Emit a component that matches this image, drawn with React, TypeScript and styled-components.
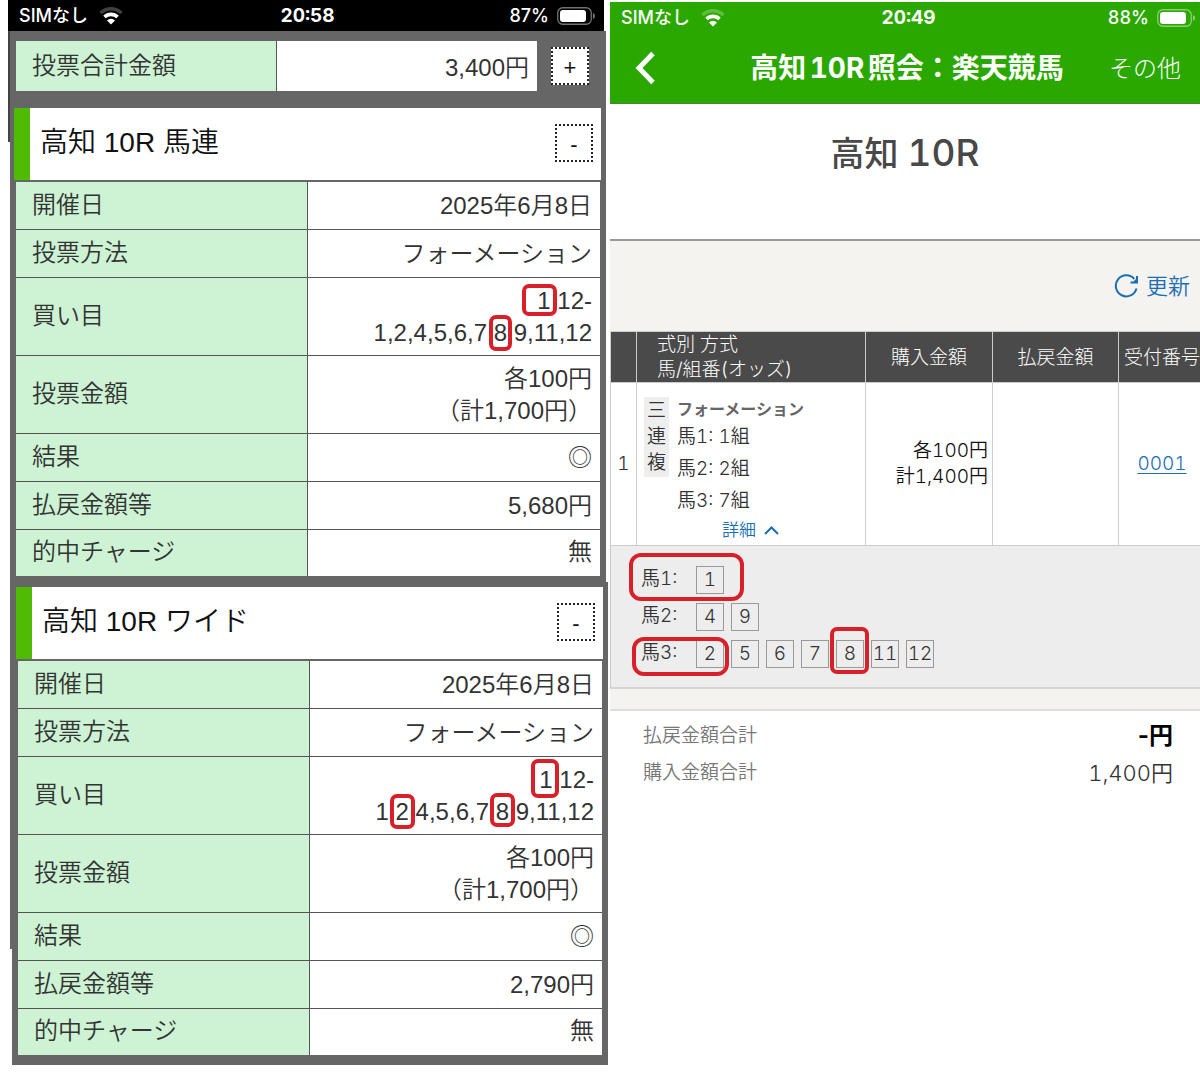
import React from "react";
import styled, { createGlobalStyle, css } from "styled-components";

const GlobalStyle = createGlobalStyle`
  *, *::before, *::after { box-sizing: border-box; }
  body {
    margin: 0;
    background: #fff;
    font-family: "Liberation Sans", "Noto Sans CJK JP", sans-serif;
  }
  button {
    margin: 0;
    padding: 0;
    border: 0;
    background: none;
    font: inherit;
    color: inherit;
    cursor: pointer;
  }
  table { border-collapse: separate; border-spacing: 0; table-layout: fixed; }
  th, td { padding: 0; font-weight: inherit; text-align: left; }
`;

const Page = styled.div`
  display: grid;
  grid-template-columns: 600fr 590fr;
  align-items: start;
  gap: 2px;
  padding-left: 8px;
`;

/* ---------- status bar ---------- */

const StatusRow = styled.div`
  display: grid;
  grid-template-columns: 1fr auto 1fr;
  align-items: center;
  height: 32px;
  padding: 0 4px 0 11px;
  color: #fff;
  font-family: Inter, "Noto Sans CJK JP", sans-serif;
  font-size: 18px;
  line-height: 32px;
  font-weight: 500;
`;

const DarkStatusRow = styled(StatusRow)`
  height: 31px;
  margin-right: 4px;
  padding-right: 8px;
  background: #000;
`;

const StatusSide = styled.div<{ $end?: boolean }>`
  display: flex;
  align-items: center;
  justify-content: ${(p) => (p.$end ? "flex-end" : "flex-start")};
  gap: ${(p) => (p.$end ? 8 : 11)}px;
`;

const Clock = styled.span`
  font-size: 19px;
  font-weight: 700;
  font-variant-numeric: tabular-nums;
`;

function Wifi() {
  return (
    <svg width="24" height="18" viewBox="0 0 24 18" fill="none" aria-hidden="true">
      <path d="M1.500 6a15 15 0 0 1 21 0" stroke="#fff" strokeOpacity="0.25" strokeWidth="3.400" />
      <path d="M5.500 10a9.300 9.300 0 0 1 13 0" stroke="#fff" strokeWidth="3.600" />
      <path d="M12 17.500l-4-4a5.600 5.600 0 0 1 8 0z" fill="#fff" />
    </svg>
  );
}

function Battery() {
  return (
    <svg width="39" height="18" viewBox="0 0 39 18" fill="none" aria-hidden="true">
      <rect x="0.75" y="0.75" width="33.5" height="16.5" rx="5" stroke="#fff" strokeOpacity="0.45" strokeWidth="1.3" />
      <rect x="3" y="3" width="26" height="12" rx="3" fill="#fff" />
      <path d="M36 6v6c1.300-.5 2-1.700 2-3s-.7-2.500-2-3z" fill="#fff" fillOpacity="0.45" />
    </svg>
  );
}

function StatusContent({ time, level }: { time: string; level: string }) {
  return (
    <>
      <StatusSide>
        <span>SIMなし</span>
        <Wifi />
      </StatusSide>
      <Clock>{time}</Clock>
      <StatusSide $end>
        <span>{level}</span>
        <Battery />
      </StatusSide>
    </>
  );
}

/* ---------- red marker rings ---------- */

const Marked = styled.span`
  position: relative;
`;

const Ring = styled.span<{ $inset: string; $round?: number }>`
  position: absolute;
  inset: ${(p) => p.$inset};
  border: 4px solid #d8202a;
  border-radius: ${(p) => p.$round ?? 7}px;
  pointer-events: none;
`;

/* ---------- left pane ---------- */

const Sheet = styled.section<{ $shifted?: boolean }>`
  position: relative;
  margin: ${(p) => (p.$shifted ? "0 0 0 4px" : "0 2px 0 2px")};
  padding: ${(p) => (p.$shifted ? "5px 0 10px" : "10px 0 6px")};
  background: #666;
  color: #333;
  font-size: 24px;
  font-weight: 350;
  line-height: 32px;

  &::before {
    content: "";
    position: absolute;
    top: 0;
    left: -2px;
    width: 2px;
    height: ${(p) => (p.$shifted ? 367 : 111)}px;
    background: ${(p) => (p.$shifted ? "#666" : "#444")};
  }
`;

const labelCell = css`
  background: #cdf3d4;
  border-right: 1px solid #555;
  padding-left: 16px;
`;

const Summary = styled.div`
  display: flex;
  align-items: center;
  gap: 14px;
  padding: 0 17px 0 6px;
  margin-bottom: 17px;
`;

const SummaryTable = styled.table`
  flex: 1;
  th {
    ${labelCell}
    width: 50%;
    height: 50px;
  }
  td {
    padding: 4px 8px 0 0;
    background: #fff;
    text-align: right;
  }
`;

const ToggleButton = styled.button`
  flex: none;
  width: 38px;
  height: 38px;
  padding-top: 4px;
  border: 2px dotted #222;
  background: #fff;
  color: #111;
  font-size: 22px;
  line-height: 30px;
`;

const BetHeader = styled.header`
  display: flex;
  align-items: center;
  justify-content: space-between;
  height: 72px;
  margin: 0 5px 2px 4px;
  padding: 0 8px 2px 10px;
  border-left: 16px solid #4fbb05;
  background: #fff;
`;

const BetTitle = styled.h2`
  margin: 0;
  color: #111;
  font-size: 28px;
  font-weight: 350;
  line-height: 32px;
`;

const BetTable = styled.table`
  width: calc(100% - 12px);
  margin: 0 6px;
  th {
    ${labelCell}
    width: 50%;
    padding-bottom: 1px;
  }
  td {
    padding-right: 8px;
    background: #fff;
    text-align: right;
  }
  th, td {
    border-bottom: 1px solid #555;
  }
  tr:last-child th, tr:last-child td {
    padding-bottom: 2px;
    border-bottom: 0;
  }
`;

const BetRow = styled.tr<{ $h: number }>`
  height: ${(p) => p.$h}px;
`;

function BetCard({ title, picks, payout }: { title: string; picks: React.ReactNode; payout: string }) {
  return (
    <>
      <BetHeader>
        <BetTitle>{title}</BetTitle>
        <ToggleButton type="button">-</ToggleButton>
      </BetHeader>
      <BetTable>
        <tbody>
          <BetRow $h={48}><th scope="row">開催日</th><td>2025年6月8日</td></BetRow>
          <BetRow $h={48}><th scope="row">投票方法</th><td>フォーメーション</td></BetRow>
          <BetRow $h={78}><th scope="row">買い目</th><td>{picks}</td></BetRow>
          <BetRow $h={78}><th scope="row">投票金額</th><td>各100円<br />（計1,700円）</td></BetRow>
          <BetRow $h={48}><th scope="row">結果</th><td>◎</td></BetRow>
          <BetRow $h={48}><th scope="row">払戻金額等</th><td>{payout}</td></BetRow>
          <BetRow $h={46}><th scope="row">的中チャージ</th><td>無</td></BetRow>
        </tbody>
      </BetTable>
    </>
  );
}

/* ---------- right pane ---------- */

const Inquiry = styled.main`
  min-width: 0;
  overflow: hidden;
  padding-top: 2px;
  color: #333;
  font-family: Inter, "Noto Sans CJK JP", sans-serif;
  font-size: 19px;
  font-weight: 350;
  font-variant-numeric: tabular-nums;
  line-height: 26px;
`;

const AppBar = styled.header`
  height: 102px;
  background: #2aa800;
  border-bottom: 1px solid #45862f;
  color: #fff;
`;

const NavRow = styled.div`
  display: grid;
  grid-template-columns: 110px 1fr 106px;
  align-items: center;
  height: 68px;
`;

const BackButton = styled.button`
  display: flex;
  padding-left: 25px;
`;

const NavTitle = styled.h1`
  margin: 0;
  font-size: 28px;
  line-height: 36px;
  font-weight: 700;
  text-align: center;
  text-autospace: normal;
  white-space: nowrap;
`;

const MoreButton = styled.button`
  padding: 2px 19px 0 0;
  font-size: 24px;
  line-height: 32px;
  font-weight: 300;
  text-align: right;
`;

const RaceTitle = styled.h2`
  margin: 0;
  height: 135px;
  padding-top: 24px;
  color: #484848;
  font-size: 34px;
  font-weight: 500;
  line-height: 50px;
  text-align: center;
`;

const RaceNumber = styled.span`
  font-size: 37px;
`;

const Toolbar = styled.div`
  display: flex;
  justify-content: flex-end;
  align-items: center;
  height: 92px;
  padding-right: 10px;
  border-top: 2px solid #999;
  background: #f4f3f0;
`;

const RefreshButton = styled.button`
  display: flex;
  align-items: center;
  gap: 7px;
  color: #1a6fb4;
  font-size: 22px;
  line-height: 30px;
`;

const OrderTable = styled.table`
  width: 100%;
  border-left: 1px solid #ccc;
  border-top: 1px solid #ccc;
  th {
    height: 51px;
    background: #4a4a4a;
    color: #fff;
    font-weight: 300;
    line-height: 25px;
    text-align: center;
    white-space: nowrap;
  }
  th:nth-child(2) {
    padding-left: 20px;
    text-align: left;
  }
  th, td {
    border-right: 1px solid #ccc;
    border-bottom: 1px solid #ccc;
  }
  th:last-child, td:last-child {
    padding-left: 5px;
    border-right: 0;
  }
  && th:last-child {
    text-align: left;
  }
  tbody td {
    height: 163px;
    background: #fff;
    text-align: center;
  }
`;

const AmountCell = styled.td`
  && {
    padding-right: 4px;
    color: #111;
    text-align: right;
  }
`;

const BetCell = styled.div`
  display: grid;
  grid-template-columns: 25px 1fr;
  column-gap: 8px;
  height: 162px;
  padding: 14px 8px 0 7px;
  text-align: left;
`;

const TypeTag = styled.span`
  align-self: start;
  height: 80px;
  padding-top: 1px;
  background: #eee;
  text-align: center;
`;

const Method = styled.div`
  color: #666;
  font-size: 16px;
  font-weight: 600;
  line-height: 24px;
`;

const Group = styled.div`
  line-height: 32px;
`;

const DetailToggle = styled.button`
  display: flex;
  align-items: center;
  gap: 8px;
  margin-left: 45px;
  color: #1a6fb4;
  font-size: 17px;
  line-height: 26px;
`;

const ReceiptLink = styled.a`
  color: #1a6fb4;
  font-size: 19px;
  text-decoration: underline;
  text-underline-offset: 3px;
`;

const Detail = styled.div`
  display: grid;
  align-content: start;
  gap: 9px;
  height: 143px;
  padding: 20px 0 0 30px;
  border-left: 1px solid #ccc;
  border-bottom: 2px solid #d4d4d4;
  background: #ededed;
`;

const DetailRow = styled.div`
  display: flex;
  width: fit-content;
  position: relative;
  line-height: 28px;
`;

const DetailLabel = styled.span`
  width: 55px;
  margin-top: -1px;
`;

const Numbers = styled.div`
  display: flex;
  gap: 7px;
`;

const NumberBox = styled.span`
  position: relative;
  display: flex;
  justify-content: center;
  width: 28px;
  height: 28px;
  border: 1px solid #999;
  line-height: 26px;
`;

const Band = styled.div`
  height: 20px;
  background: #f4f3f0;
`;

const Totals = styled.dl`
  margin: 0;
  padding: 7px 27px 0 33px;
  border-top: 2px solid #ddd;
`;

const TotalRow = styled.div`
  display: flex;
  justify-content: space-between;
  height: 37px;
  line-height: 36px;
  dt { color: #777; }
  dd { margin: 0; font-size: 22px; }
`;

const Strong = styled.strong`
  color: #000;
  font-size: 24px;
  font-weight: 700;
  font-variant-numeric: normal;
`;

export default function App() {
  return (
    <>
      <GlobalStyle />
      <Page>
        <div>
          <DarkStatusRow>
            <StatusContent time="20:58" level="87%" />
          </DarkStatusRow>
          <Sheet>
            <Summary>
              <SummaryTable>
                <tbody>
                  <tr>
                    <th scope="row">投票合計金額</th>
                    <td>3,400円</td>
                  </tr>
                </tbody>
              </SummaryTable>
              <ToggleButton type="button">+</ToggleButton>
            </Summary>
            <BetCard
              title="高知 10R 馬連"
              payout="5,680円"
              picks={
                <>
                  <Marked>1<Ring $inset="-3px -6px -2px -15px" /></Marked>,12-
                  <br />
                  1,2,4,5,6,7,<Marked>8<Ring $inset="-4px -5px -5px -5px" /></Marked>,9,11,12
                </>
              }
            />
          </Sheet>
          <Sheet $shifted>
            <BetCard
              title="高知 10R ワイド"
              payout="2,790円"
              picks={
                <>
                  <Marked>1<Ring $inset="-7px -6px -5px -8px" /></Marked>,12-
                  <br />
                  1,<Marked>2<Ring $inset="-4px -6px -4px -6px" /></Marked>,4,5,6,7,
                  <Marked>8<Ring $inset="-5px -6px -2px -6px" /></Marked>,9,11,12
                </>
              }
            />
          </Sheet>
        </div>

        <Inquiry>
          <AppBar>
            <StatusRow>
              <StatusContent time="20:49" level="88%" />
            </StatusRow>
            <NavRow>
              <BackButton type="button" aria-label="戻る">
                <svg width="20" height="34" viewBox="0 0 20 34" fill="none" aria-hidden="true">
                  <path d="M18 2.500L4 17l14 14.500" stroke="#fff" strokeWidth="5" />
                </svg>
              </BackButton>
              <NavTitle>高知10R照会：楽天競馬</NavTitle>
              <MoreButton type="button">その他</MoreButton>
            </NavRow>
          </AppBar>

          <RaceTitle>高知 <RaceNumber>10R</RaceNumber></RaceTitle>

          <Toolbar>
            <RefreshButton type="button">
              <svg width="25" height="24" viewBox="0 0 25 24" fill="none" stroke="#1a6fb4" strokeWidth="2" aria-hidden="true">
                <path d="M22.500 14.500A10.500 10.500 0 1 1 20.300 5" />
                <path d="M23 2v6.500h-6.500" />
                <path d="M23 4v4.500h-4.500z" fill="#1a6fb4" stroke="none" />
              </svg>
              更新
            </RefreshButton>
          </Toolbar>

          <OrderTable>
            <colgroup>
              <col style={{ width: "26px" }} />
              <col />
              <col style={{ width: "127px" }} />
              <col style={{ width: "126px" }} />
              <col style={{ width: "81px" }} />
            </colgroup>
            <thead>
              <tr>
                <th />
                <th scope="col">式別 方式<br />馬/組番(オッズ)</th>
                <th scope="col">購入金額</th>
                <th scope="col">払戻金額</th>
                <th scope="col">受付番号</th>
              </tr>
            </thead>
            <tbody>
              <tr>
                <td>1</td>
                <td>
                  <BetCell>
                    <TypeTag>三<br />連<br />複</TypeTag>
                    <div>
                      <Method>フォーメーション</Method>
                      <Group>馬1: 1組</Group>
                      <Group>馬2: 2組</Group>
                      <Group>馬3: 7組</Group>
                      <DetailToggle type="button">
                        詳細
                        <svg width="15" height="9" viewBox="0 0 15 9" fill="none" aria-hidden="true">
                          <path d="M1 8l6.500-6.500L14 8" stroke="#1a6fb4" strokeWidth="2" />
                        </svg>
                      </DetailToggle>
                    </div>
                  </BetCell>
                </td>
                <AmountCell>各100円<br />計1,400円</AmountCell>
                <td />
                <td><ReceiptLink href="#0001">0001</ReceiptLink></td>
              </tr>
            </tbody>
          </OrderTable>

          <Detail>
            <DetailRow>
              <DetailLabel>馬1:</DetailLabel>
              <Numbers><NumberBox>1</NumberBox></Numbers>
              <Ring $inset="-13px -20px -7px -12px" $round={12} />
            </DetailRow>
            <DetailRow>
              <DetailLabel>馬2:</DetailLabel>
              <Numbers><NumberBox>4</NumberBox><NumberBox>9</NumberBox></Numbers>
            </DetailRow>
            <DetailRow>
              <DetailLabel>馬3:</DetailLabel>
              <Numbers>
                <NumberBox>2<Ring $inset="-4px -6px -9px -65px" $round={12} /></NumberBox>
                <NumberBox>5</NumberBox>
                <NumberBox>6</NumberBox>
                <NumberBox>7</NumberBox>
                <NumberBox>8<Ring $inset="-14px -6px -7px -7px" /></NumberBox>
                <NumberBox>11</NumberBox>
                <NumberBox>12</NumberBox>
              </Numbers>
            </DetailRow>
          </Detail>

          <Band />
          <Totals>
            <TotalRow>
              <dt>払戻金額合計</dt>
              <dd><Strong>-円</Strong></dd>
            </TotalRow>
            <TotalRow>
              <dt>購入金額合計</dt>
              <dd>1,400円</dd>
            </TotalRow>
          </Totals>
        </Inquiry>
      </Page>
    </>
  );
}
